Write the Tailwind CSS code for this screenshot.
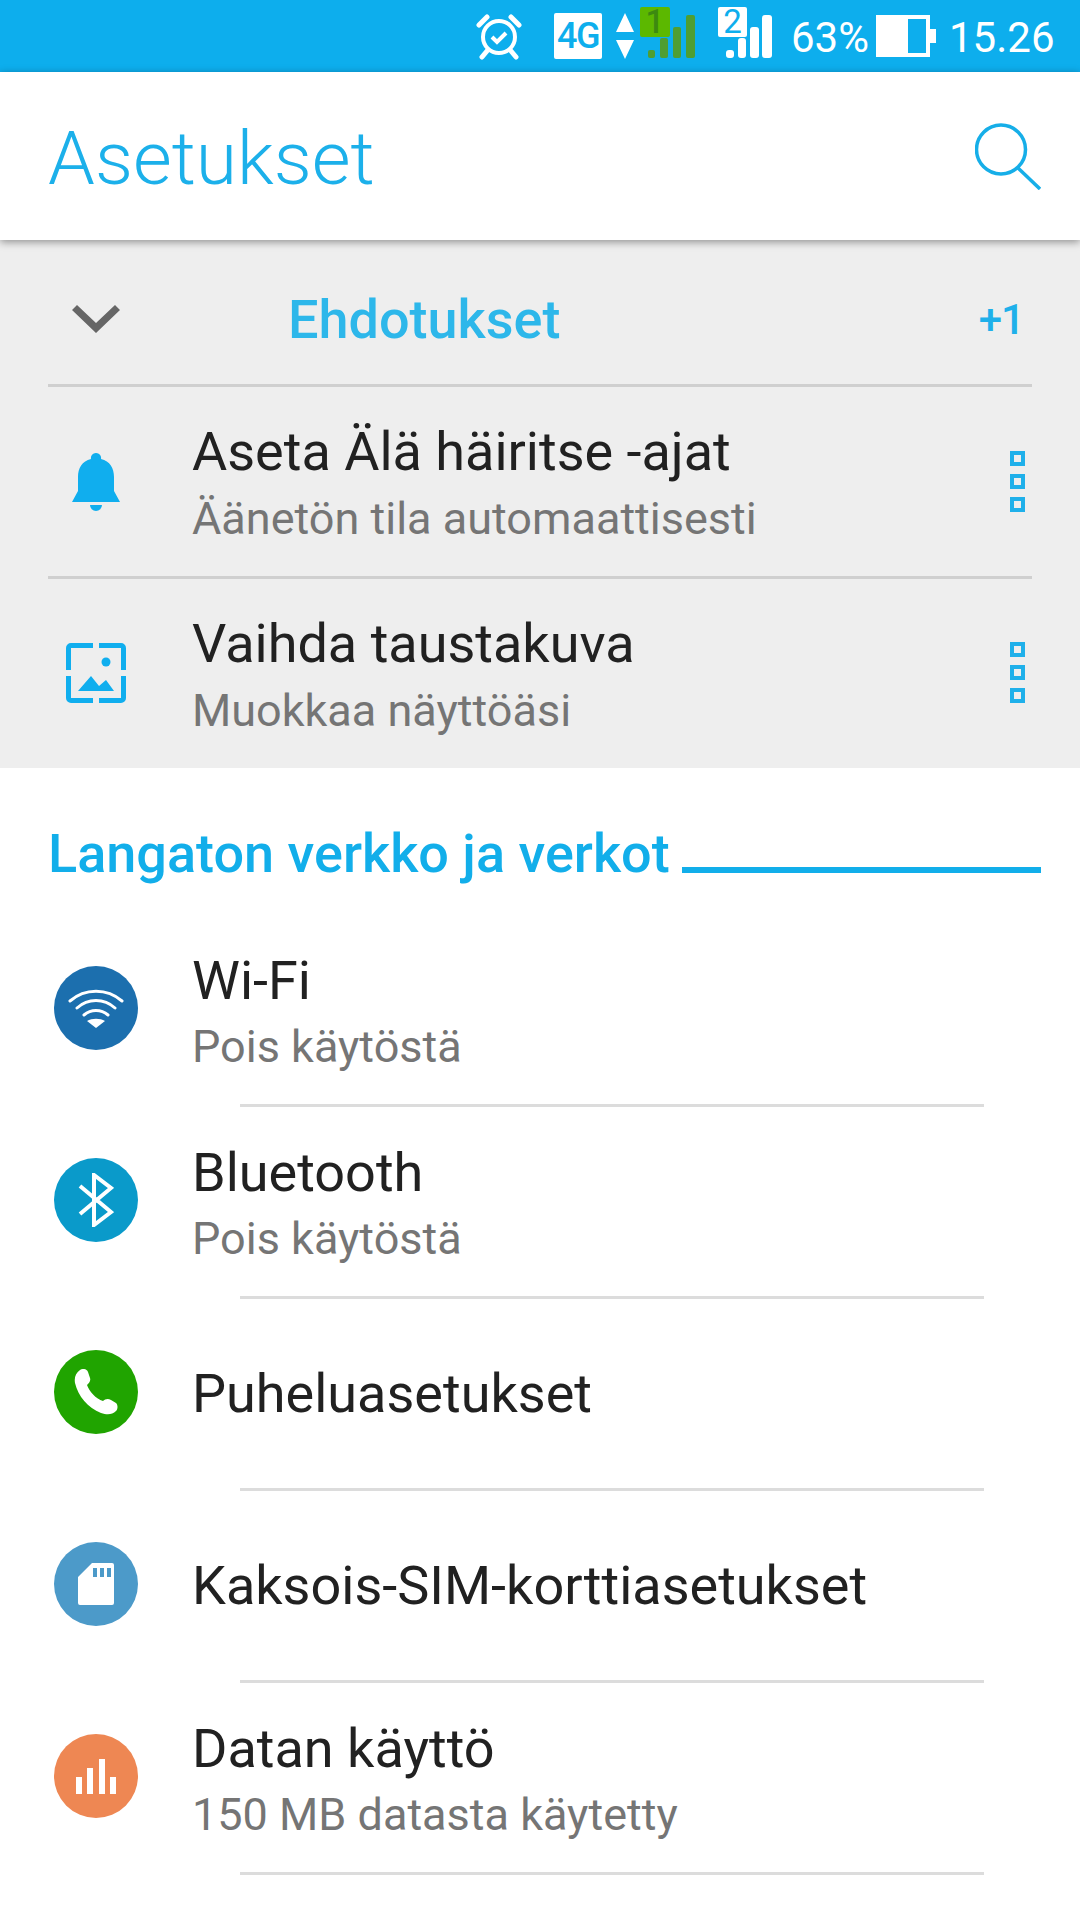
<!DOCTYPE html>
<html><head><meta charset="utf-8"><script src="https://cdn.jsdelivr.net/npm/@tailwindcss/browser@4"></script></head>
<body class="bg-white font-['Roboto',sans-serif]">
<div class="w-[1080px] h-[1920px] overflow-hidden bg-white flex flex-col">
  <!-- status bar -->
  <div class="h-[72px] bg-[#0daeed] relative shrink-0 text-white">
    <div class="h-full flex items-center">
      <svg class="ml-[475px] w-[48px] h-[48px]" viewBox="0 0 48 48" fill="none" stroke="#fff"><circle cx="24" cy="25" r="16" stroke-width="4"/><path d="M17 25l5 5 9-9" stroke-width="4"/><path d="M4 13 12 5M44 13 36 5M12 39 7 45M36 39l5 6" stroke-width="5" stroke-linecap="round"/></svg>
      <div class="ml-[31px] w-[48px] h-[46px] bg-white text-[#0daeed] rounded-[2px] flex items-center justify-center text-[36px] font-medium tracking-[-1.5px]">4G</div>
      <svg class="ml-[13px] w-[20px] h-[46px]" viewBox="0 0 20 46" fill="#fff"><path d="M10 0 19 19H1ZM1 27H19L10 46Z"/></svg>
      <svg class="ml-[5px] w-[56px] h-[52px] -mt-[6px]" viewBox="0 0 56 52"><g fill="#4f9e32"><rect x="8" y="43" width="7" height="8" rx="2"/><rect x="20" y="31" width="8" height="20" rx="2"/><rect x="33" y="20" width="8" height="31" rx="2"/><rect x="46" y="8" width="9" height="43" rx="2"/></g><rect x="0" y="0" width="30" height="30" rx="2" fill="#5cb800"/></svg>
      <div class="absolute left-[640px] top-[6px] w-[30px] h-[30px] text-center text-[33px] leading-[32px] text-[#3d8a10] font-medium">1</div>
      <svg class="ml-[22px] w-[56px] h-[52px] -mt-[6px]" viewBox="0 0 56 52"><g fill="#fff"><rect x="8" y="43" width="8" height="8" rx="3"/><rect x="20" y="31" width="8" height="20" rx="3"/><rect x="32" y="20" width="9" height="31" rx="3"/><rect x="44" y="8" width="10" height="43" rx="3"/></g><rect x="0" y="0" width="29" height="30" rx="2" fill="#fff"/></svg>
      <div class="absolute left-[718px] top-[6px] w-[29px] h-[30px] text-center text-[33px] leading-[32px] text-[#0daeed]">2</div>
      <span class="absolute left-[791px] top-[13px] text-[42px] leading-[50px]">63%</span>
      <svg class="absolute left-[876px] top-[15px] w-[60px] h-[42px]" viewBox="0 0 60 42" fill="#fff"><path fill-rule="evenodd" d="M0 0H54V42H0ZM32 4V38H50V4Z"/><rect x="54" y="14" width="6" height="14"/></svg>
      <span class="absolute left-[949px] top-[13px] text-[42px] leading-[50px]">15.26</span>
    </div>
  </div>
  <!-- app bar -->
  <div class="h-[168px] bg-white shrink-0 relative z-10 shadow-[0_2px_8px_rgba(0,0,0,0.4)] flex items-center justify-between pl-[48px] pr-[39px]">
    <span class="text-[75px] font-light text-[#1cb0ea] leading-none pt-[5px]">Asetukset</span>
    <svg class="w-[66px] h-[67px]" viewBox="0 0 66 67" fill="none" stroke="#16aee8" stroke-width="3.500"><circle cx="26" cy="26.500" r="24.500"/><path d="M43 45 65 66"/></svg>
  </div>
  <!-- suggestions -->
  <div class="h-[528px] bg-[#eeeeee] shrink-0 flex flex-col">
    <div class="h-[147px] mx-[48px] pt-[14px] border-b-[3px] border-[#cfcfcf] relative flex items-center justify-between shrink-0">
      <div class="flex items-center">
        <svg class="ml-[24px] w-[48px] h-[28px]" viewBox="0 0 48 28" fill="#666"><path d="M0 5 5 0 24 18 43 0 48 5 24 28Z"/></svg>
        <span class="ml-[168px] text-[54px] font-medium text-[#2db7ea]">Ehdotukset</span>
      </div>
      <span class="mr-[8px] text-[42px] font-medium text-[#1fb0ea] tracking-[-1px]">+1</span>
    </div>
    <div class="h-[192px] mx-[48px] border-b-[3px] border-[#cfcfcf] flex items-center shrink-0">
      <div class="w-[96px] flex justify-center"><svg class="w-[48px] h-[58px]" viewBox="0 0 48 58" fill="#10aeee"><path d="M24 0a5 5 0 0 1 5 6C38 8 42 15 42 24V38L48 49H0L6 38V24C6 15 10 8 19 6A5 5 0 0 1 24 0ZM18 52H30A6 6 0 0 1 18 52Z"/></svg></div>
      <div class="flex-1 ml-[48px] pt-[3px]">
        <div class="text-[54px] leading-[60px] text-[#212121]">Aseta Älä häiritse -ajat</div>
        <div class="text-[45px] leading-[50px] mt-[12px] text-[#757575]">Äänetön tila automaattisesti</div>
      </div>
      <div class="flex flex-col gap-[8px] mr-[7px]"><i class="block w-[15px] h-[15px] border-[4px] border-[#1fb0ea]"></i><i class="block w-[15px] h-[15px] border-[4px] border-[#1fb0ea]"></i><i class="block w-[15px] h-[15px] border-[4px] border-[#1fb0ea]"></i></div>
    </div>
    <div class="h-[187px] mx-[48px] flex items-center shrink-0">
      <div class="w-[96px] flex justify-center"><svg class="w-[60px] h-[60px]" viewBox="0 0 60 60" fill="#10aeee"><path fill="none" stroke="#10aeee" stroke-width="5" d="M27 2.500H5A2.500 2.500 0 0 0 2.500 5V27M33 2.500H55A2.500 2.500 0 0 1 57.500 5V27M27 57.500H5A2.500 2.500 0 0 1 2.500 55V33M33 57.500H55A2.500 2.500 0 0 0 57.500 55V33"/><circle cx="40" cy="19" r="4.500"/><path d="M12 48 25 33 33 43 40 37 48 48Z"/></svg></div>
      <div class="flex-1 ml-[48px] pt-[5px]">
        <div class="text-[54px] leading-[60px] text-[#212121]">Vaihda taustakuva</div>
        <div class="text-[45px] leading-[50px] mt-[12px] text-[#757575]">Muokkaa näyttöäsi</div>
      </div>
      <div class="flex flex-col gap-[8px] mr-[7px]"><i class="block w-[15px] h-[15px] border-[4px] border-[#1fb0ea]"></i><i class="block w-[15px] h-[15px] border-[4px] border-[#1fb0ea]"></i><i class="block w-[15px] h-[15px] border-[4px] border-[#1fb0ea]"></i></div>
    </div>
  </div>
  <!-- section heading -->
  <div class="h-[144px] shrink-0 flex items-center pl-[48px] pr-[39px] pt-[27px]">
    <span class="text-[54px] font-medium text-[#12aeea]">Langaton verkko ja verkot</span>
    <div class="flex-1 h-[6px] bg-[#12aeea] ml-[12px] mt-[33px]"></div>
  </div>
  <!-- list -->
  <div class="flex flex-col">
    <div class="h-[192px] relative flex items-center pl-[54px]">
      <div class="w-[84px] h-[84px] rounded-full bg-[#1c6fae] flex items-center justify-center"><svg class="w-[56px] h-[42px]" viewBox="0 0 56 42" fill="none" stroke="#fff" stroke-width="3" stroke-linecap="round"><path d="M2 14C17 1 39 1 54 14M9 21C20 11 36 11 47 21M16 28C23 22 33 22 40 28"/><path d="M19 34C24 31 32 31 37 34L28 41Z" fill="#fff" stroke="none"/></svg></div>
      <div class="ml-[54px] pt-[6px]"><div class="text-[54px] leading-[60px] text-[#212121]">Wi-Fi</div><div class="text-[45px] leading-[50px] mt-[11px] text-[#757575]">Pois käytöstä</div></div>
      <div class="absolute left-[240px] right-[96px] -bottom-[3px] h-[3px] bg-[#dcdcdc]"></div>
    </div>
    <div class="h-[192px] relative flex items-center pl-[54px]">
      <div class="w-[84px] h-[84px] rounded-full bg-[#0a9aca] flex items-center justify-center"><svg class="w-[36px] h-[54px]" viewBox="0 0 36 54" fill="none" stroke="#fff" stroke-width="4"><path d="M2 13 33 39 16 52V2L33 15 2 41"/></svg></div>
      <div class="ml-[54px] pt-[6px]"><div class="text-[54px] leading-[60px] text-[#212121]">Bluetooth</div><div class="text-[45px] leading-[50px] mt-[11px] text-[#757575]">Pois käytöstä</div></div>
      <div class="absolute left-[240px] right-[96px] -bottom-[3px] h-[3px] bg-[#dcdcdc]"></div>
    </div>
    <div class="h-[192px] relative flex items-center pl-[54px]">
      <div class="w-[84px] h-[84px] rounded-full bg-[#20a400] flex items-center justify-center"><svg class="w-[44px] h-[46px]" viewBox="0 0 44 46" fill="#fff"><path d="M6 1C9-1 13 0 14 3L16 9C17 12 15 14 13 16 15 22 22 30 29 32 31 30 34 29 37 31L42 34C44 36 44 40 42 42 38 46 33 46 27 44 14 39 4 27 1 14 0 8 2 4 6 1Z"/></svg></div>
      <div class="ml-[54px] pt-[4px] text-[54px] leading-[60px] text-[#212121]">Puheluasetukset</div>
      <div class="absolute left-[240px] right-[96px] -bottom-[3px] h-[3px] bg-[#dcdcdc]"></div>
    </div>
    <div class="h-[192px] relative flex items-center pl-[54px]">
      <div class="w-[84px] h-[84px] rounded-full bg-[#4c9ac9] flex items-center justify-center"><svg class="w-[36px] h-[42px]" viewBox="0 0 36 42" fill="#fff"><path fill-rule="evenodd" d="M14 0H34A2 2 0 0 1 36 2V40A2 2 0 0 1 34 42H2A2 2 0 0 1 0 40V14ZM15 5V14H19V5ZM22 5V14H26V5ZM29 5V14H33V5Z"/></svg></div>
      <div class="ml-[54px] pt-[4px] text-[54px] leading-[60px] text-[#212121]">Kaksois-SIM-korttiasetukset</div>
      <div class="absolute left-[240px] right-[96px] -bottom-[3px] h-[3px] bg-[#dcdcdc]"></div>
    </div>
    <div class="h-[192px] relative flex items-center pl-[54px]">
      <div class="w-[84px] h-[84px] rounded-full bg-[#ee8753] flex items-center justify-center"><svg class="w-[40px] h-[35px]" viewBox="0 0 40 35" fill="#fff"><rect x="0" y="18" width="6" height="17"/><rect x="11" y="9" width="6" height="26"/><rect x="23" y="0" width="6" height="35"/><rect x="34" y="18" width="6" height="17"/></svg></div>
      <div class="ml-[54px] pt-[6px]"><div class="text-[54px] leading-[60px] text-[#212121]">Datan käyttö</div><div class="text-[45px] leading-[50px] mt-[11px] text-[#757575]">150 MB datasta käytetty</div></div>
      <div class="absolute left-[240px] right-[96px] -bottom-[3px] h-[3px] bg-[#dcdcdc]"></div>
    </div>
  </div>
</div>
</body></html>
